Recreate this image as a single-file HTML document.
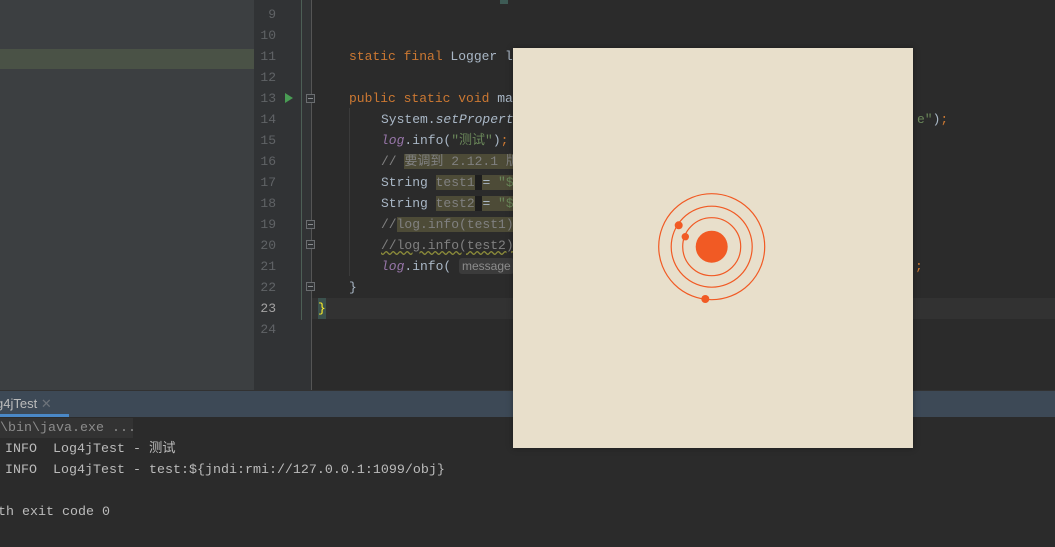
<!DOCTYPE html>
<html><head><meta charset="utf-8"><style>
*{margin:0;padding:0;box-sizing:border-box}
body{width:1055px;height:547px;overflow:hidden;background:#2b2b2b;position:relative;font-family:"Liberation Mono","Noto Sans CJK SC",monospace;font-size:13px;color:#a9b7c6}
.a{position:absolute}
.ln{position:absolute;left:254px;width:22px;text-align:right;color:#606366;font-size:13px;line-height:21px;height:21px}
.c{position:absolute;white-space:pre;line-height:21px;height:21px}
.k{color:#cc7832}.s{color:#6a8759}.p{color:#9876aa;font-style:italic}.cm{color:#808080}.f{font-style:italic}
.ol{background:#4d4b37}
.fold{position:absolute;left:306px;width:9px;height:9px;border:1px solid #6a6d70;background:#313335}
.fold:after{content:"";position:absolute;left:1px;top:3px;width:5px;height:1px;background:#8a8d90}
.con{position:absolute;white-space:pre;line-height:21px;color:#bbbbbb;font-size:13.33px}
</style></head><body>
<div class="a" style="left:0;top:0;width:254px;height:390px;background:#3c3f41"></div>
<div class="a" style="left:0;top:49px;width:254px;height:20px;background:#4a5246"></div>
<div class="a" style="left:254px;top:0;width:58px;height:390px;background:#313335"></div>
<div class="a" style="left:301px;top:0;width:1px;height:320px;background:#4c5f56"></div>
<div class="a" style="left:311px;top:0;width:1px;height:390px;background:#555"></div>
<div class="a" style="left:312px;top:298px;width:743px;height:21px;background:#323232"></div>
<div class="a" style="left:500px;top:0;width:8px;height:4px;background:#3e5b55"></div>

<div class="ln" style="top:4px">9</div>
<div class="ln" style="top:25px">10</div>
<div class="ln" style="top:46px">11</div>
<div class="ln" style="top:67px">12</div>
<div class="ln" style="top:88px">13</div>
<div class="ln" style="top:109px">14</div>
<div class="ln" style="top:130px">15</div>
<div class="ln" style="top:151px">16</div>
<div class="ln" style="top:172px">17</div>
<div class="ln" style="top:193px">18</div>
<div class="ln" style="top:214px">19</div>
<div class="ln" style="top:235px">20</div>
<div class="ln" style="top:256px">21</div>
<div class="ln" style="top:277px">22</div>
<div class="ln" style="top:298px;color:#a4a3a3">23</div>
<div class="ln" style="top:319px">24</div>

<svg class="a" style="left:285px;top:93px" width="8" height="10"><path d="M0 0L8 5L0 10Z" fill="#499c54"/></svg>
<div class="fold" style="top:94px"></div>
<div class="fold" style="top:220px"></div>
<div class="fold" style="top:240px"></div>
<div class="fold" style="top:282px"></div>
<div class="a" style="left:349px;top:108px;width:1px;height:168px;background:#3b3b3b"></div>

<div class="c" style="left:349px;top:46px"><span class="k">static final </span>Logger l</div>
<div class="c" style="left:349px;top:88px"><span class="k">public static void </span>ma</div>
<div class="c" style="left:381px;top:109px">System.<span class="f">setPropert</span></div>
<div class="c" style="left:381px;top:130px"><span class="p">log</span>.info(<span class="s">"测试"</span>)<span class="k">;</span></div>
<div class="c cm" style="left:381px;top:151px">// <span class="ol">要调到 2.12.1 版本以下                 </span></div>
<div class="c" style="left:381px;top:172px">String <span class="ol cm">test1</span><span style="background:#1e1e1e"> </span><span class="ol">= <span class="s">"$</span>          </span></div>
<div class="c" style="left:381px;top:193px">String <span class="ol cm">test2</span><span style="background:#1e1e1e"> </span><span class="ol">= <span class="s">"$</span>          </span></div>
<div class="c cm" style="left:381px;top:214px">//<span class="ol">log.info(test1)              </span></div>
<div class="c cm" style="left:381px;top:235px;text-decoration:underline wavy #8c8c3a">//log.info(test2)</div>
<div class="c" style="left:381px;top:256px"><span class="p">log</span>.info( <span style="background:#3b3b3b;color:#8c8c8c;font-family:'Liberation Sans',sans-serif;font-size:12px;border-radius:3px;padding:1px 3px">message</span></div>
<div class="c" style="left:349px;top:277px">}</div>
<div class="c" style="left:318px;top:298px;color:#ffef28;background:#3b514d">}</div>
<div class="c" style="left:917px;top:109px"><span class="s">e"</span>)<span class="k">;</span></div>
<div class="c k" style="left:915px;top:256px">;</div>

<div class="a" style="left:0;top:390px;width:1055px;height:1px;background:#323232"></div>
<div class="a" style="left:0;top:391px;width:1055px;height:26px;background:#3d4956"></div>
<div class="a" style="left:0;top:414px;width:69px;height:3px;background:#4a88c7"></div>
<div class="a" style="left:-4px;top:396px;color:#bbb;font-family:'Liberation Sans',sans-serif;font-size:13px">g4jTest <span style="color:#6d737a">✕</span></div>
<div class="a" style="left:0;top:418px;width:133px;height:20px;background:#333"></div>
<div class="con" style="left:0;top:418px;color:#8c8c8c">\bin\java.exe ...</div>
<div class="con" style="left:5px;top:439px">INFO  Log4jTest - 测试</div>
<div class="con" style="left:5px;top:460px">INFO  Log4jTest - test:${jndi:rmi://127.0.0.1:1099/obj}</div>
<div class="con" style="left:-2px;top:502px">th exit code 0</div>

<div class="a" style="left:513px;top:48px;width:400px;height:400px;background:#e8dfcb;box-shadow:0 0 6px rgba(0,0,0,.35)"></div>
<svg class="a" style="left:513px;top:48px" width="400" height="400">
<g fill="none" stroke="#f15a24" stroke-width="1.2">
<circle cx="198.7" cy="198.7" r="29"/><circle cx="198.7" cy="198.7" r="40.5"/><circle cx="198.7" cy="198.7" r="53"/></g>
<g fill="#f15a24"><circle cx="198.7" cy="198.7" r="16"/><circle cx="165.7" cy="177.3" r="4"/><circle cx="172.3" cy="188.7" r="3.7"/><circle cx="192.3" cy="251" r="4"/></g>
</svg>
</body></html>
